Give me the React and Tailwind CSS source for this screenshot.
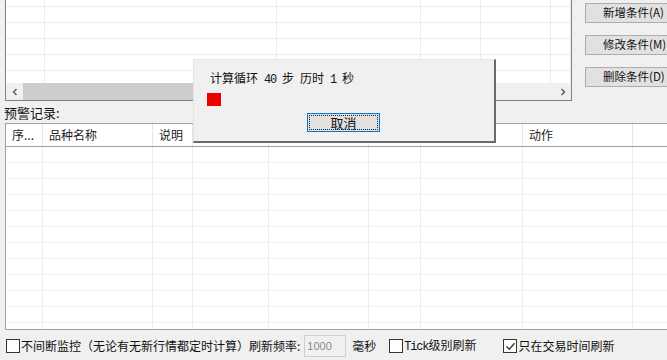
import React from 'react';

const cjk = { fontFamily: '"Noto Sans CJK SC", "Liberation Sans", sans-serif' };
const mono = { fontFamily: '"Liberation Mono", "Noto Sans CJK SC", monospace' };

const topCols = [39, 232, 144, 60, 70, 20];
const bottomCols = [
  { w: 37, label: '序...' },
  { w: 110, label: '品种名称' },
  { w: 40, label: '说明' },
  { w: 76, label: '' },
  { w: 100, label: '' },
  { w: 52, label: '' },
  { w: 102, label: '' },
  { w: 110, label: '动作' },
  { w: 40, label: '' },
];

const Checkbox = ({ checked }) => (
  <span className="w-[14px] h-[14px] border border-[#333] bg-white flex items-center justify-center shrink-0">
    {checked && (
      <svg width="11" height="11" viewBox="0 0 11 11">
        <path d="M1.5 5.5 L4.3 8.3 L9.5 2.3" fill="none" stroke="#333" strokeWidth="1.3" />
      </svg>
    )}
  </span>
);

const SideButton = ({ children }) => (
  <button className="w-[90px] h-[20px] bg-[#e1e1e1] border border-[#adadad] text-[11.5px] text-[#111] text-left pl-[17px] leading-none whitespace-nowrap">
    {children}
  </button>
);

export default function App() {
  return (
    <div className="relative w-[667px] h-[360px] overflow-hidden bg-[#f0f0f0] text-[#111]" style={cjk}>
      {/* top section */}
      <div className="flex h-[101px]">
        <div className="ml-[5px] w-[567px] h-[101px] flex flex-col border-l border-r border-b border-[#828282] bg-white">
          <div className="flex-1 overflow-hidden">
            <div className="mt-[-9px]">
              {[0, 1, 2, 3, 4, 5].map((r) => (
                <div key={r} className="flex h-4 border-b border-[#ececec]">
                  {topCols.map((w, i) => (
                    <div key={i} className="h-full border-r border-[#ececec] shrink-0" style={{ width: w }} />
                  ))}
                </div>
              ))}
            </div>
          </div>
          <div className="h-[17px] flex bg-[#f0f0f0]">
            <div className="w-[17px] flex items-center justify-center">
              <svg width="8" height="8" viewBox="0 0 8 8">
                <path d="M5.5 1 L2.5 4 L5.5 7" fill="none" stroke="#606060" strokeWidth="1.5" />
              </svg>
            </div>
            <div className="flex-1 flex">
              <div className="w-[226px] h-full bg-[#cdcdcd]" />
            </div>
            <div className="w-[17px] flex items-center justify-center">
              <svg width="8" height="8" viewBox="0 0 8 8">
                <path d="M2.5 1 L5.5 4 L2.5 7" fill="none" stroke="#606060" strokeWidth="1.5" />
              </svg>
            </div>
          </div>
        </div>
        <div className="ml-[13px] pt-[3px] flex flex-col gap-[12px]">
          <SideButton>新增条件(A)</SideButton>
          <SideButton>修改条件(M)</SideButton>
          <SideButton>删除条件(D)</SideButton>
        </div>
      </div>

      {/* label */}
      <div className="h-[22px] pl-[4px] pt-[4px] text-[13px] leading-[16px]">预警记录:</div>

      {/* bottom table */}
      <div className="ml-[5px] h-[207px] border-l border-t border-b border-[#a0a0a0] bg-white overflow-hidden">
        <div className="flex h-[23px] border-b border-[#a0a0a0]">
          {bottomCols.map((c, i) => (
            <div
              key={i}
              className="h-full border-r border-[#e5e5e5] shrink-0 text-[12px] flex items-center pl-[6px] text-[#222] whitespace-nowrap"
              style={{ width: c.w }}
            >
              {c.label}
            </div>
          ))}
        </div>
        {Array.from({ length: 12 }).map((_, r) => (
          <div key={r} className="flex h-4 border-b border-[#efefef]">
            {bottomCols.map((c, i) => (
              <div key={i} className="h-full border-r border-[#ececec] shrink-0" style={{ width: c.w }} />
            ))}
          </div>
        ))}
      </div>

      {/* bottom controls */}
      <div className="flex items-center h-[30px] pl-[6px] pt-[2px] text-[12px] whitespace-nowrap">
        <Checkbox />
        <span className="ml-[1px]">不间断监控（无论有无新行情都定时计算）刷新频率:</span>
        <div className="ml-[4px] w-[42px] h-[22px] border border-[#cfcfcf] bg-[#f0f0f0] text-[#8a8a8a] flex items-center pl-[2px]" style={{ fontFamily: '"Liberation Sans", sans-serif', fontSize: 11 }}>
          1000
        </div>
        <span className="ml-[6px]">毫秒</span>
        <span className="ml-[13px]"><Checkbox /></span>
        <span className="ml-[1px]"><span className="text-[12px] tracking-[-1.2px]" style={mono}>Tick</span>级别刷新</span>
        <span className="ml-[27px]"><Checkbox checked /></span>
        <span className="ml-[1px]">只在交易时间刷新</span>
      </div>

      {/* progress dialog */}
      <div className="absolute left-[193px] top-[59px] w-[303px] h-[84px] bg-[#f0f0f0] border-l border-t border-[#e3e3e3] border-r-2 border-b-2 border-r-[#6a6a6a] border-b-[#6a6a6a]">
        <div className="pl-[16px] pt-[10px] text-[12px] leading-[16px] whitespace-nowrap">
          计算循环<span className="tracking-[-1.2px]" style={mono}> 40 </span>步<span className="tracking-[-1.2px]" style={mono}> </span>历时<span className="tracking-[-1.2px]" style={mono}> 1 </span>秒
        </div>
        <div className="ml-[13px] mt-[5px] w-[14px] h-[13px] bg-[#ee0000]" />
        <div className="flex mt-[7px] pl-[113px]">
          <button className="w-[73px] h-[19px] border border-[#0078d7] bg-[#e1e1e1] p-[1px]">
            <div className="w-full h-full border border-dotted border-[#222] flex items-center justify-center text-[13px] leading-none">
              取消
            </div>
          </button>
        </div>
      </div>
    </div>
  );
}
